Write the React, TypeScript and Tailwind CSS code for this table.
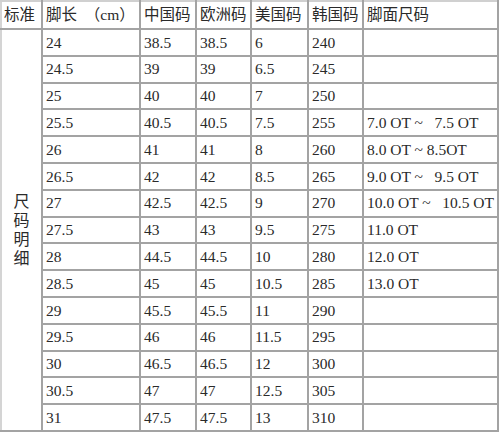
const rows: [string, string, string, string, string, string][] = [
  ["24", "38.5", "38.5", "6", "240", ""],
  ["24.5", "39", "39", "6.5", "245", ""],
  ["25", "40", "40", "7", "250", ""],
  ["25.5", "40.5", "40.5", "7.5", "255", "7.0 OT ~\u00a0\u00a0 7.5 OT"],
  ["26", "41", "41", "8", "260", "8.0 OT ~ 8.5OT"],
  ["26.5", "42", "42", "8.5", "265", "9.0 OT ~\u00a0\u00a0 9.5 OT"],
  ["27", "42.5", "42.5", "9", "270", "10.0 OT ~\u00a0\u00a0 10.5 OT"],
  ["27.5", "43", "43", "9.5", "275", "11.0 OT"],
  ["28", "44.5", "44.5", "10", "280", "12.0 OT"],
  ["28.5", "45", "45", "10.5", "285", "13.0 OT"],
  ["29", "45.5", "45.5", "11", "290", ""],
  ["29.5", "46", "46", "11.5", "295", ""],
  ["30", "46.5", "46.5", "12", "300", ""],
  ["30.5", "47", "47", "12.5", "305", ""],
  ["31", "47.5", "47.5", "13", "310", ""],
];

const headers = ["脚长\u00a0\u00a0（cm）", "中国码", "欧洲码", "美国码", "韩国码", "脚面尺码"];

export default function App() {
  return (
    <div className="w-[500px] h-[434px] bg-white overflow-hidden text-[#2a2a2a] font-['Liberation_Serif','Noto_Sans_CJK_SC',serif]">
      <table className="table-fixed border-collapse w-[497px] text-[15.5px] leading-none">
        <colgroup>
          <col className="w-[41px]" />
          <col className="w-[98px]" />
          <col className="w-[56px]" />
          <col className="w-[55px]" />
          <col className="w-[57px]" />
          <col className="w-[55px]" />
          <col className="w-[135px]" />
        </colgroup>
        <thead>
          <tr className="h-[28px]">
            <th className="border-2 border-[#a3a3a3] border-l-[#d4d4d4] border-l-dashed border-t-[#d0d0d0] font-normal text-left pl-[2px] whitespace-nowrap">
              标准
            </th>
            {headers.map((h) => (
              <th
                key={h}
                className="border-2 border-[#a3a3a3] border-t-[#d0d0d0] font-normal text-left pl-[3px] whitespace-nowrap"
              >
                {h}
              </th>
            ))}
          </tr>
        </thead>
        <tbody>
          {rows.map((r, i) => (
            <tr key={r[0]} className="h-[26.8px]">
              {i === 0 && (
                <td
                  rowSpan={rows.length}
                  className="border-2 border-[#a3a3a3] border-l-[#d4d4d4] border-l-dashed align-middle text-center"
                >
                  <div className="flex flex-col items-center leading-[19px] text-[16px]">
                    <span>尺</span>
                    <span>码</span>
                    <span>明</span>
                    <span>细</span>
                  </div>
                </td>
              )}
              {r.map((c, j) => (
                <td
                  key={j}
                  className="border-2 border-[#a3a3a3] text-left pl-[3px] whitespace-nowrap"
                >
                  {c}
                </td>
              ))}
            </tr>
          ))}
        </tbody>
      </table>
    </div>
  );
}
